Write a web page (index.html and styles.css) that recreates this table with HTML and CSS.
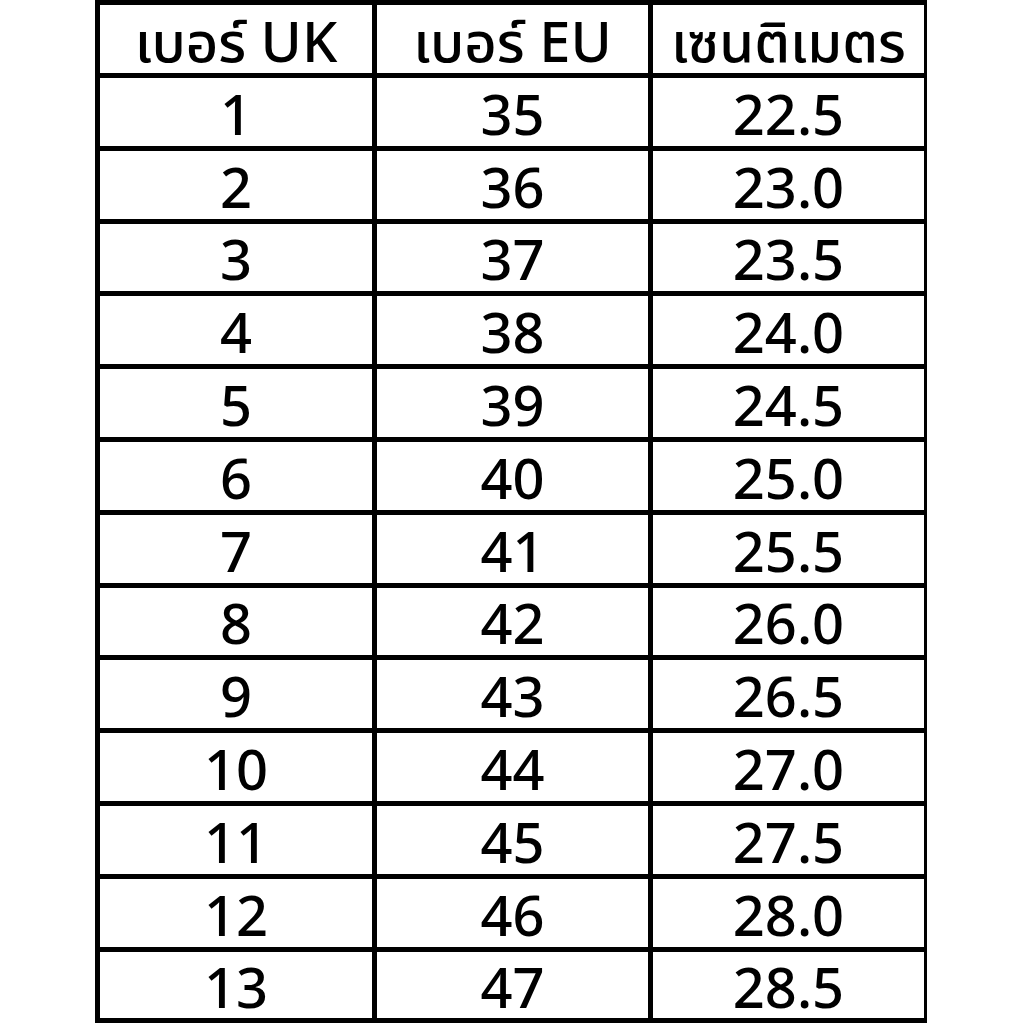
FILE: index.html
```html
<!DOCTYPE html>
<html lang="th">
<head>
<meta charset="utf-8">
<title>ตารางเทียบไซซ์รองเท้า</title>
<link rel="stylesheet" href="styles.css">
</head>
<body>
<div class="page">
  <div class="size-table">
    <div class="cell head">เบอร์ UK</div><div class="cell head">เบอร์ EU</div><div class="cell head">เซนติเมตร</div>
    <div class="cell">1</div><div class="cell">35</div><div class="cell">22.5</div>
    <div class="cell">2</div><div class="cell">36</div><div class="cell">23.0</div>
    <div class="cell">3</div><div class="cell">37</div><div class="cell">23.5</div>
    <div class="cell">4</div><div class="cell">38</div><div class="cell">24.0</div>
    <div class="cell">5</div><div class="cell">39</div><div class="cell">24.5</div>
    <div class="cell">6</div><div class="cell">40</div><div class="cell">25.0</div>
    <div class="cell">7</div><div class="cell">41</div><div class="cell">25.5</div>
    <div class="cell">8</div><div class="cell">42</div><div class="cell">26.0</div>
    <div class="cell">9</div><div class="cell">43</div><div class="cell">26.5</div>
    <div class="cell">10</div><div class="cell">44</div><div class="cell">27.0</div>
    <div class="cell">11</div><div class="cell">45</div><div class="cell">27.5</div>
    <div class="cell">12</div><div class="cell">46</div><div class="cell">28.0</div>
    <div class="cell">13</div><div class="cell">47</div><div class="cell">28.5</div>
  </div>
</div>
</body>
</html>
```

FILE: styles.css
```css
html, body {
  margin: 0;
  padding: 0;
  background: #ffffff;
}

.page {
  width: 1024px;
  height: 1024px;
  padding-left: 95px;
  box-sizing: border-box;
}

.size-table {
  display: grid;
  width: 832px;
  box-sizing: border-box;
  background: #000000;
  padding: 5px;
  gap: 5px;
  grid-template-columns: 272px 271px 271px;
  grid-template-rows: 68px repeat(12, 67.8px) 66px;
  font-family: "Noto Sans", "Noto Sans Thai", Tahoma, "DejaVu Sans", sans-serif;
  font-weight: 500;
  color: #000000;
}

.cell {
  background: #ffffff;
  display: flex;
  align-items: center;
  justify-content: center;
  font-size: 56px;
  line-height: 1;
  padding-top: 2px;
  box-sizing: border-box;
}

.head {
  font-size: 56px;
}
```
